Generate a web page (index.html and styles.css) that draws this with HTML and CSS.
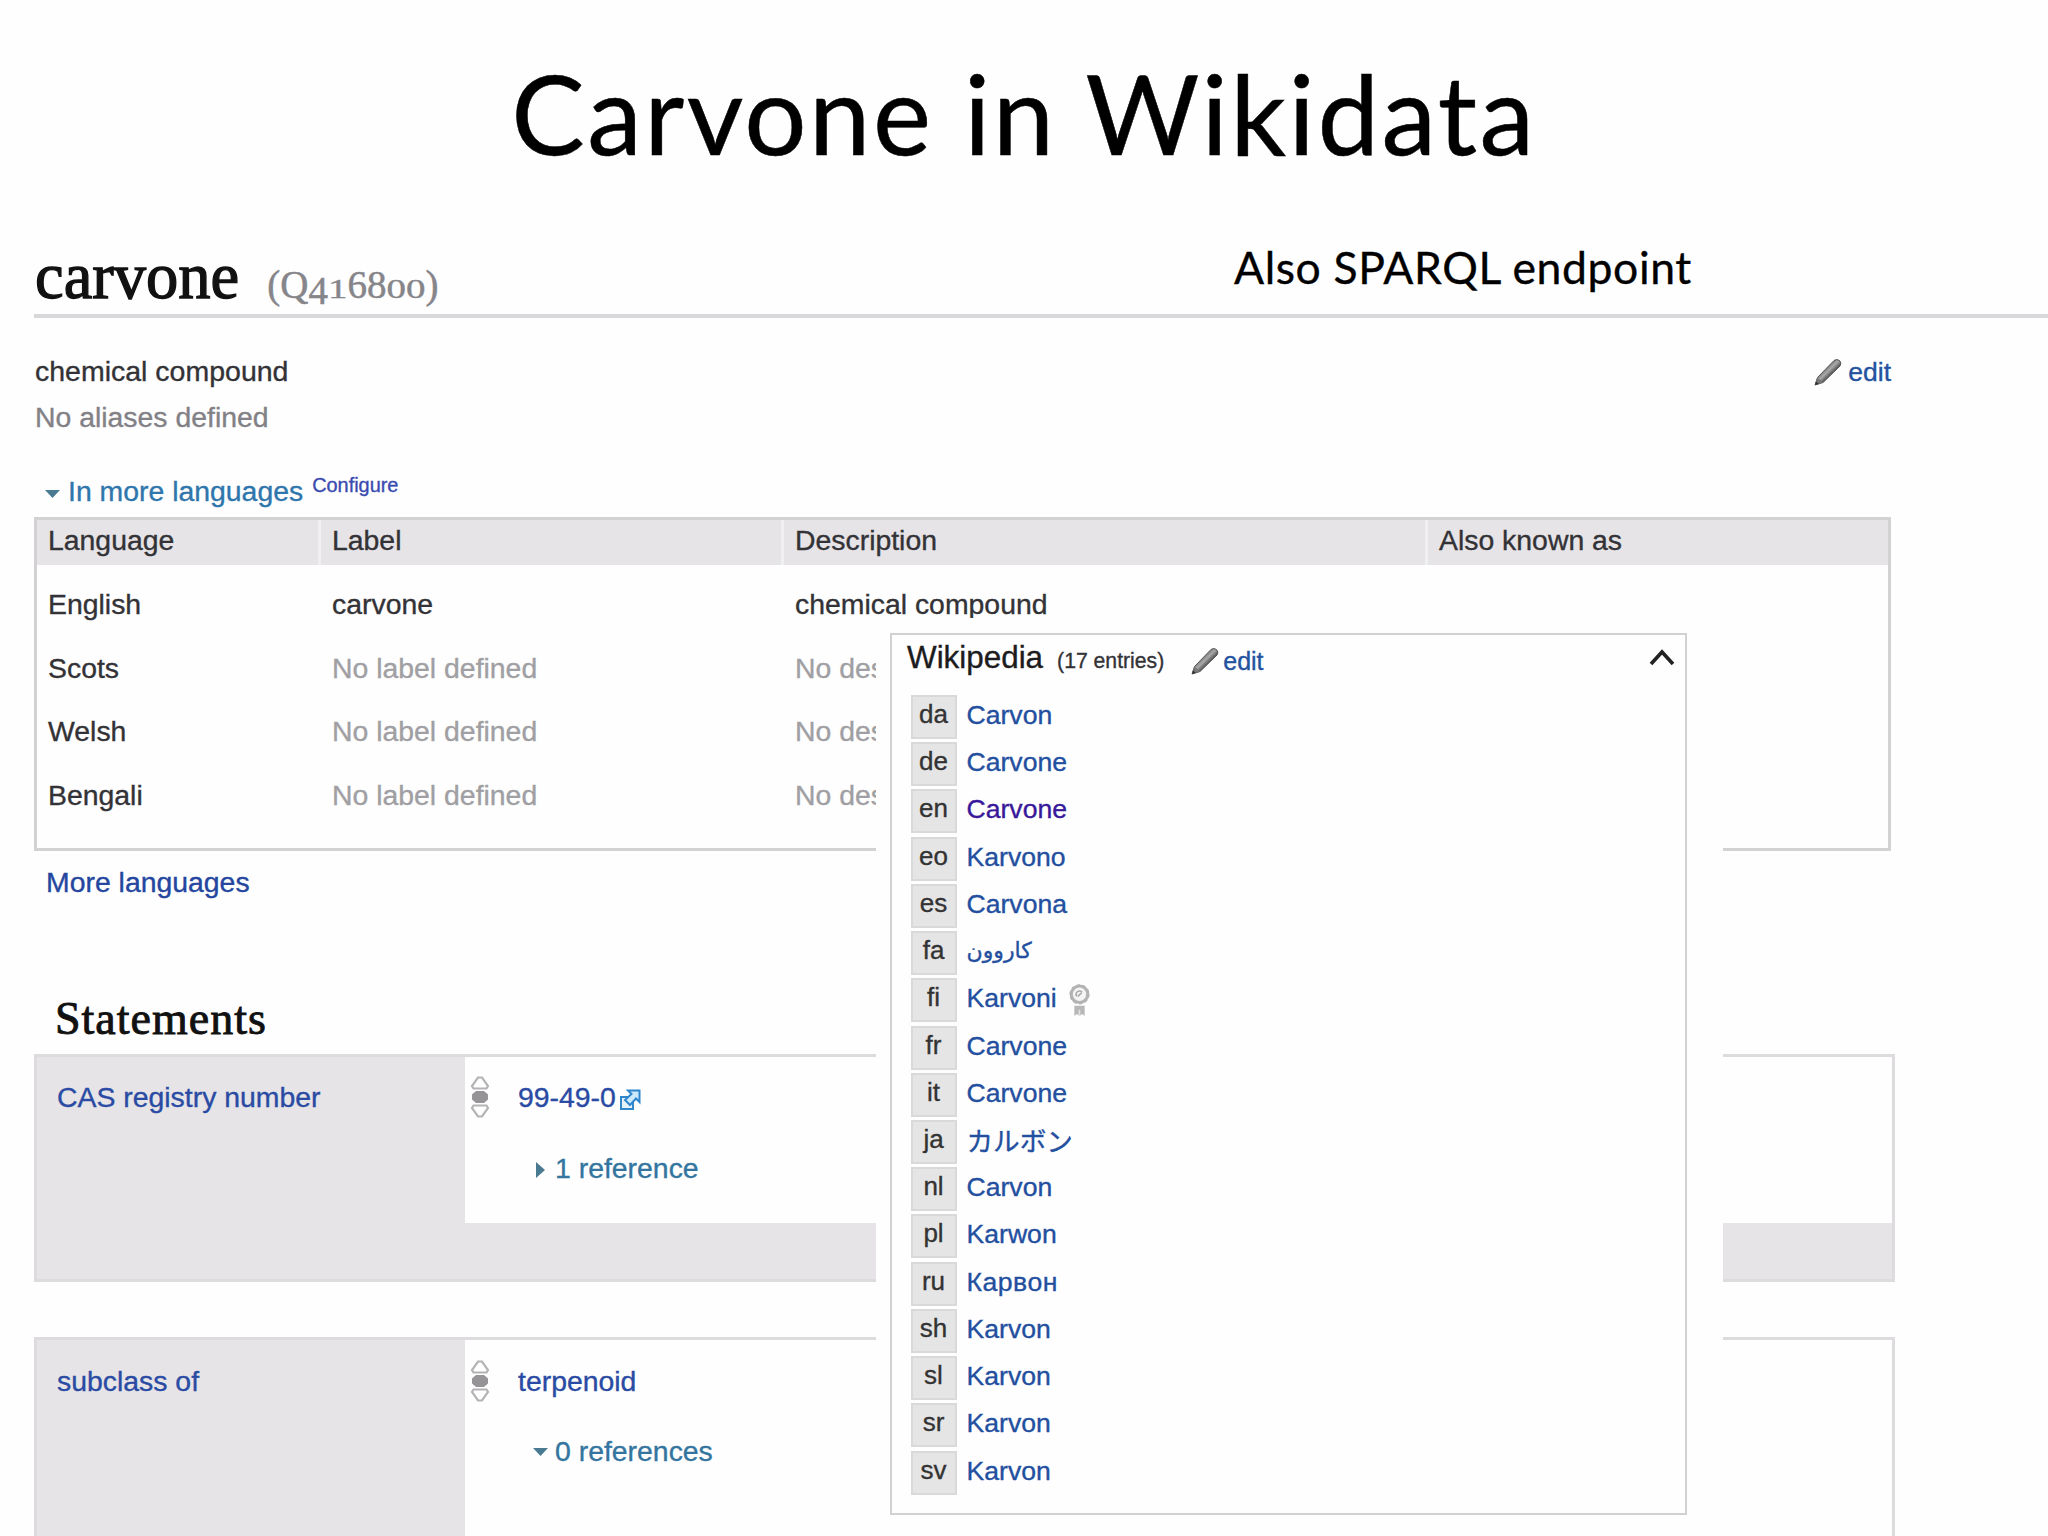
FILE: index.html
```html
<!DOCTYPE html>
<html lang="en">
<head>
<meta charset="utf-8">
<title>Carvone in Wikidata</title>
<link rel="stylesheet" href="styles.css">
</head>
<body>
<svg class="defs" width="0" height="0" aria-hidden="true">
  <defs>
    <linearGradient id="shaft" x1="0" y1="0" x2="1" y2="1">
      <stop offset=".3" stop-color="#555"/><stop offset=".48" stop-color="#a9a9a9"/><stop offset=".62" stop-color="#4a4a4a"/>
    </linearGradient>
    <symbol id="pencil" viewBox="0 0 28 28">
      <path d="M1 27 3.500 19.500 20 2.500Q22.500.5 25.500 2.500 28 5 26 8L9 24.500Z" fill="url(#shaft)" stroke="#555" stroke-width="1"/>
      <path d="M1 27 3.500 19.500 9 24.500Z" fill="#777"/>
      <path d="M1 27 2 23.500 5 26Z" fill="#333"/>
    </symbol>
    <symbol id="rank" viewBox="0 0 20 44">
      <path d="M8 2.500h4L18 11 16.500 13.500h-13L2 11ZM8 41.500h4L18 33 16.500 30.500h-13L2 33Z" fill="#fff" stroke="#b5b3b5" stroke-width="2.200"/>
      <path d="M6 16h8l4 3.500v5L14 28H6l-4-3.500v-5Z" fill="#969496"/>
    </symbol>
  </defs>
</svg>
<main class="slide">
  <h1 class="title"><span>Carvone in Wikidata</span></h1>
  <header class="entity">
    <h2 class="label">carvone <span class="qid">(Q<i class="low">4</i><i class="small">1</i>68<i class="small">00</i>)</span></h2>
    <p class="note">Also SPARQL endpoint</p>
  </header>

  <section class="terms">
    <div class="summary">
      <div>
        <p class="desc">chemical compound</p>
        <p class="aliases">No aliases defined</p>
      </div>
      <a class="edit"><svg class="pencil"><use href="#pencil"/></svg>edit</a>
    </div>
    <div class="toggle-row"><span class="tri down"></span><a class="toggle">In more languages</a><a class="configure">Configure</a></div>
    <div class="langs">
      <div class="row head"><span>Language</span><span>Label</span><span>Description</span><span>Also known as</span></div>
      <div class="row"><span>English</span><span>carvone</span><span>chemical compound</span><span></span></div>
      <div class="row"><span>Scots</span><span class="none">No label defined</span><span class="none">No des</span><span></span></div>
      <div class="row"><span>Welsh</span><span class="none">No label defined</span><span class="none">No des</span><span></span></div>
      <div class="row"><span>Bengali</span><span class="none">No label defined</span><span class="none">No des</span><span></span></div>
    </div>
    <a class="more">More languages</a>
  </section>

  <section class="statements">
    <h2 class="section-title">Statements</h2>
    <div class="group">
      <div class="property">CAS registry number</div>
      <div class="claim">
        <svg class="rank"><use href="#rank"/></svg>
        <div>
          <p class="value">99-49-0<svg class="ext" viewBox="0 0 22 22"><path d="M9 8H2v12h12v-7" fill="#e4f3fc" stroke="#3188cb" stroke-width="2"/><path d="M9 1.500h11.500V13L17 9.500 11 16 6 11 12.500 5Z" fill="#cdeafb" stroke="#2f86cc" stroke-width="2"/></svg></p>
          <p class="refs"><span class="tri right"></span>1 reference</p>
        </div>
      </div>
    </div>
    <div class="group second">
      <div class="property">subclass of</div>
      <div class="claim">
        <svg class="rank"><use href="#rank"/></svg>
        <div>
          <p class="value">terpenoid</p>
          <p class="refs"><span class="tri down"></span>0 references</p>
        </div>
      </div>
    </div>
  </section>

  <aside class="overlay">
    <div class="panel">
      <header class="panel-head">
        <span class="site">Wikipedia</span><span class="count">(17 entries)</span>
        <a class="edit"><svg class="pencil"><use href="#pencil"/></svg>edit</a>
        <svg class="chevron" viewBox="0 0 26 18"><path d="M2 16 13 4 24 16" fill="none" stroke="#222" stroke-width="3.600"/></svg>
      </header>
      <ul class="sites">
        <li><b>da</b><a>Carvon</a></li>
        <li><b>de</b><a>Carvone</a></li>
        <li><b>en</b><a class="visited">Carvone</a></li>
        <li><b>eo</b><a>Karvono</a></li>
        <li><b>es</b><a>Carvona</a></li>
        <li><b>fa</b><a class="fa" lang="fa">کاروون</a></li>
        <li><b>fi</b><a>Karvoni</a><svg class="badge" viewBox="0 0 20 32"><circle cx="10" cy="10" r="8" fill="#f4f4f4" stroke="#b3b3b3" stroke-width="3"/><circle cx="10" cy="10" r="8.800" fill="none" stroke="#b3b3b3" stroke-width="2" stroke-dasharray="3 2.500"/><path d="M7.500 12a3.200 3.200 0 0 1 5-4M8.500 12l3.500-3.500" fill="none" stroke="#aaa" stroke-width="1.500"/><path d="M5 21h10v10l-2.500-2-2.500 2-2.500-2L5 31Z" fill="#b7b7b7"/><path d="M10 25v6" stroke="#e4e4e4" stroke-width="1.500"/></svg></li>
        <li><b>fr</b><a>Carvone</a></li>
        <li><b>it</b><a>Carvone</a></li>
        <li><b>ja</b><a class="ja" lang="ja">カルボン</a></li>
        <li><b>nl</b><a>Carvon</a></li>
        <li><b>pl</b><a>Karwon</a></li>
        <li><b>ru</b><a class="ru">Карвон</a></li>
        <li><b>sh</b><a>Karvon</a></li>
        <li><b>sl</b><a>Karvon</a></li>
        <li><b>sr</b><a>Karvon</a></li>
        <li><b>sv</b><a>Karvon</a></li>
      </ul>
    </div>
  </aside>
</main>
</body>
</html>
```
FILE: styles.css
```css
* { box-sizing: border-box; }
body, h1, h2, p, ul { margin: 0; padding: 0; }
body { background: #fefefe; }
.defs { display: block; position: absolute; }

.slide {
  position: relative;
  width: 2048px;
  height: 1536px;
  overflow: hidden;
  padding-left: 34px;
  background: #fefefe;
  color: #333236;
  font: 28.4px/36px "Liberation Sans", Arial, sans-serif;
  white-space: nowrap;
  -webkit-text-stroke: .35px currentColor;
}

.title {
  height: 232px;
  margin-left: -34px;
  text-align: center;
  font: 400 110px/224px Lato, Calibri, sans-serif;
  letter-spacing: 2.400px;
  color: #000;
  -webkit-text-stroke: .5px #000;
}

.entity {
  display: grid;
  grid-template-columns: 1200px 1fr;
  height: 86px;
  border-bottom: 4px solid #d8d7d9;
}
.label {
  padding-left: 1px;
  font: 400 64.5px/89px "Liberation Serif", Georgia, serif;
  color: #111;
  -webkit-text-stroke: 1.300px #111;
}
.qid { margin-left: 12px; font-size: 39px; color: #86858a; -webkit-text-stroke: .5px #86858a; }
.qid i { display: inline-block; font-style: normal; line-height: 40px; }
.low { transform: translateY(6px); }
.small { transform: scaleY(.7); transform-origin: 50% 83%; }
.note { font: 44.5px/70px Lato, Calibri, sans-serif; letter-spacing: .6px; color: #000; }

.summary { display: flex; justify-content: space-between; width: 1857px; padding: 31px 0 0 1px; height: 149px; }
.desc { line-height: 45px; font-size: 28.5px; }
.aliases { line-height: 46px; color: #828186; }
.edit { display: flex; align-items: center; gap: 6px; height: 45px; font-size: 26.5px; color: #24529f; }
.pencil { width: 28px; height: 28px; }

.toggle-row { display: flex; align-items: baseline; height: 50px; padding: 6px 0 0 11px; }
.tri { display: inline-block; flex: none; }
.tri.down { width: 15px; height: 8px; background: #4a7a92; clip-path: polygon(0 0, 100% 0, 50% 100%); transform: translateY(-3px); }
.tri.right { width: 9px; height: 16px; background: #4a7a92; clip-path: polygon(0 0, 100% 50%, 0 100%); transform: translateY(2px); }
.toggle { margin-left: 8px; color: #2f76ac; }
.configure { margin-left: 9px; font-size: 19.9px; color: #3a4bb0; transform: translateY(-9px); }

.langs { width: 1857px; height: 334px; border: 3px solid #d3d1d4; }
.row { display: grid; grid-template-columns: 284px 463px 644px 1fr; height: 63.7px; line-height: 63.7px; }
.row span { padding-left: 11px; }
.row.head { height: 45px; line-height: 40px; margin-bottom: 8px; background: #e6e4e7; }
.row.head span + span { border-left: 3px solid #f0eff1; margin-left: -3px; }
.none { color: #a09fa3; }
.more { display: block; padding-left: 12px; line-height: 63px; color: #24469f; }

.section-title {
  margin: 72px 0 0 21px;
  height: 68px;
  font: 400 46px/66px "Liberation Serif", Georgia, serif;
  letter-spacing: 1px;
  color: #111;
  -webkit-text-stroke: .9px #111;
}
.group {
  display: grid;
  grid-template-columns: 428px 1fr;
  width: 1861px;
  height: 228px;
  border: 3px solid #dddbde;
  background: #e6e4e7;
}
.property { padding: 17px 0 0 20px; line-height: 46px; color: #2a4ba3; }
.claim { display: flex; height: 166px; padding: 17px 0 0 5px; background: #fefefe; }
.rank { width: 20px; height: 44px; margin: 1px 28px 0 0; }
.value { line-height: 46px; color: #2a4ba3; }
.refs { display: flex; align-items: center; gap: 10px; margin-top: 25px; padding-left: 18px; line-height: 46px; color: #33759f; }
.second .refs { padding-left: 15px; gap: 7px; }
.refs .tri.down { transform: translateY(1px); }
.ext { width: 22px; height: 22px; margin-left: 3px; vertical-align: -4px; }
.group.second { margin-top: 55px; height: 260px; }
.second .claim, .second .property { padding-top: 18px; }
.second .claim { height: 257px; }
.second .refs { margin-top: 24px; }

/* panel floating over the item page */
.overlay {
  position: absolute;
  left: 876px;
  top: 618px;
  width: 847px;
  height: 918px;
  padding: 15px 36px 21px 14px;
  background: #fefefe;
}
.panel { height: 882px; border: 2.500px solid #d2d0d3; }
.panel-head { display: flex; align-items: baseline; height: 60px; padding-left: 15px; line-height: 46px; }
.site { font-size: 31.4px; color: #1c1c1e; }
.count { margin-left: 14px; font-size: 21.2px; }
.panel-head .edit { align-self: flex-start; margin: 3px 0 0 27px; font-size: 25px; gap: 4px; }
.chevron { align-self: flex-start; width: 26px; height: 18px; margin: 13px 10px 0 auto; }
.sites { list-style: none; padding-left: 18.500px; }
.sites li { display: flex; height: 47.23px; line-height: 40px; font-size: 26.6px; color: #234f9f; }
.sites b { width: 46px; height: 44px; margin-right: 10px; border: 2px solid #dad9da; background: #e6e5e6; text-align: center; font-weight: 400; font-size: 26px; line-height: 35px; color: #333; }
.sites .visited { color: #38179a; }
.fa { font-family: "DejaVu Sans", sans-serif; font-size: 22px; }
.ja { font-family: "Noto Sans CJK JP", sans-serif; }
.ru { letter-spacing: .5px; }
.badge { width: 21px; height: 33px; margin: 6px 0 0 12px; }
```
